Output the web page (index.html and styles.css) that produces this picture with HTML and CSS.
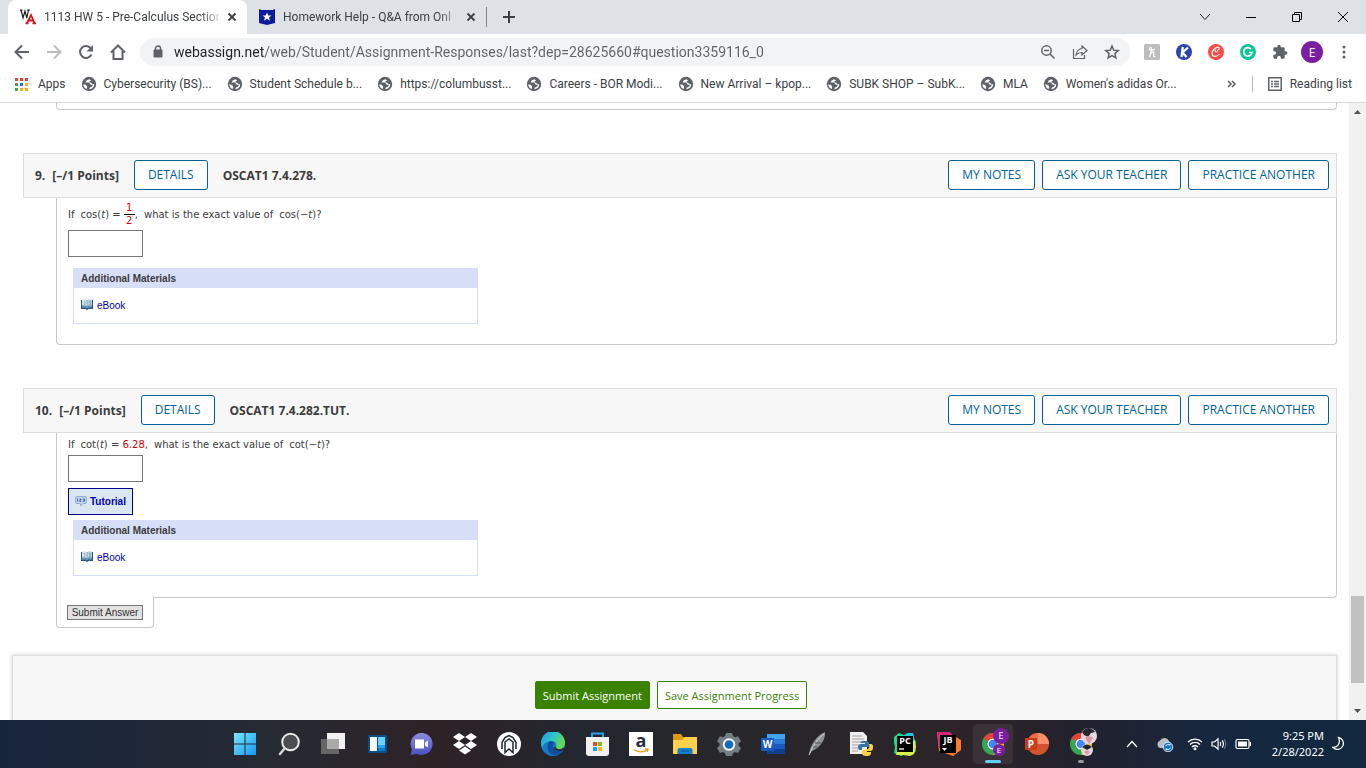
FILE: index.html
```html
<!DOCTYPE html>
<html lang="en">
<head>
  <meta charset="utf-8">
  <title>1113 HW 5 - Pre-Calculus Section</title>
  <link rel="stylesheet" href="styles.css">
</head>
<body>
  <!-- shared icons -->
  <svg class="sprite" aria-hidden="true">
    <symbol id="globe" viewBox="0 0 16 16">
      <circle cx="8" cy="8" r="7.2" fill="#5f6368"/>
      <path d="M8.500 3.200 5.800 4.300 4.600 6.500h3.600l1.500 2.300h2.200l-1 2-2 .6-.6 1.800c2.800-.2 4.900-2.300 5-5l-1.800.1-1.400-1.600-1.600-.2.200-1.300 1.500-.7z" fill="#fff"/>
      <path d="M2.200 8.300 5 9l1.200 1.800-.5 2.200A5.500 5.500 0 0 1 2.200 8.300z" fill="#fff"/>
    </symbol>
    <symbol id="close" viewBox="0 0 10 10">
      <path d="M1.5 1.5l7 7m0-7l-7 7" stroke="#3c4043" stroke-width="1.8" fill="none"/>
    </symbol>
    <symbol id="book" viewBox="0 0 12 11">
      <path d="M0 1h12v9H7.500L6 11 4.500 10H0z" fill="#27577f"/>
      <path d="M1 .5h4l1 1v7.500l-1-.8H1z" fill="#d5e3ec"/>
      <path d="M11 .5H7l-1 1v7.500l1-.8h4z" fill="#b5cddc"/>
      <path d="M1 6.500h4l1 .8V9l-1-.8H1zM11 6.500H7l-1 .8V9l1-.8h4z" fill="#5f93b8"/>
      <path d="M6 1.500v7.500M2.500 2.500h1.500v3H2.500M8 2.500h1.500v3H8" stroke="#7d99ac" stroke-width=".6" fill="none"/>
    </symbol>
    <symbol id="chrome" viewBox="0 0 24 24">
      <circle cx="12" cy="12" r="11" fill="#34a853"/>
      <path d="M12 12 2.500 6.500A11 11 0 0 1 21.500 6.500z" fill="#ea4335"/>
      <path d="M12 7h9.800A11 11 0 0 1 12 23l4.500-8.500z" fill="#fbbc05"/>
      <circle cx="12" cy="12" r="5.500" fill="#fff"/>
      <circle cx="12" cy="12" r="4.300" fill="#4285f4"/>
    </symbol>
  </svg>

  <!-- tab strip -->
  <header class="tabs">
    <div class="tab tab-active">
      <svg width="16" height="16" viewBox="0 0 16 16"><path d="M1 1l2 8 2-7 1.800 7L8.500 1M0 1.200h2.500M7.200 1.200h2.600" stroke="#222" stroke-width="1.200" fill="none"/><path d="M7 14 11 6l3.500 8M8.500 11.500h5M5.500 14.300h3M12.500 14.300h3.500" stroke="#d31515" stroke-width="1.800" fill="none"/></svg>
      <span class="tab-title">1113 HW 5 - Pre-Calculus Section</span>
      <button class="icon-btn" aria-label="Close tab"><svg width="10" height="10"><use href="#close"/></svg></button>
    </div>
    <div class="tab">
      <svg width="16" height="16" viewBox="0 0 16 16"><path d="M0 0l2.500 1h11L16 0v14l-8 2-8-2z" fill="#0c1b9a"/><path d="M8 3.500l1.300 3h3.200L10 8.500l1 3.200-3-2-3 2 1-3.200-2.500-2h3.200z" fill="#fff"/></svg>
      <span class="tab-title">Homework Help - Q&amp;A from Onl</span>
      <button class="icon-btn" aria-label="Close tab"><svg width="10" height="10"><use href="#close"/></svg></button>
    </div>
    <span class="tab-divider"></span>
    <button class="icon-btn new-tab" aria-label="New tab"><svg width="14" height="14" viewBox="0 0 14 14"><path d="M7 1v12M1 7h12" stroke="#3c4043" stroke-width="2"/></svg></button>
    <div class="window-controls">
      <button class="icon-btn" aria-label="Search tabs"><svg width="12" height="12" viewBox="0 0 12 12"><path d="M1 3l5 5.500L11 3" stroke="#222" fill="none"/></svg></button>
      <button class="icon-btn" aria-label="Minimize"><svg width="12" height="12" viewBox="0 0 12 12"><path d="M1 6.500h10" stroke="#000"/></svg></button>
      <button class="icon-btn" aria-label="Restore"><svg width="12" height="12" viewBox="0 0 12 12"><path d="M1.500 3.500h7v7h-7zM3.500 3.500v-2h7v7h-2" stroke="#000" fill="none"/></svg></button>
      <button class="icon-btn" aria-label="Close"><svg width="12" height="12" viewBox="0 0 12 12"><path d="M1 1l10 10M11 1L1 11" stroke="#000"/></svg></button>
    </div>
  </header>

  <!-- toolbar -->
  <div class="toolbar">
    <button class="icon-btn" aria-label="Back"><svg width="16" height="16" viewBox="0 0 16 16"><path d="M15 8H2M8 1.500 1.500 8 8 14.500" stroke="#5f6368" stroke-width="2" fill="none"/></svg></button>
    <button class="icon-btn" aria-label="Forward"><svg width="16" height="16" viewBox="0 0 16 16"><path d="M1 8h13M8 1.500 14.500 8 8 14.500" stroke="#babcbe" stroke-width="2" fill="none"/></svg></button>
    <button class="icon-btn" aria-label="Reload"><svg width="16" height="16" viewBox="0 0 16 16"><path d="M13.500 10.500A6 6 0 1 1 13 4.500" stroke="#5f6368" stroke-width="2" fill="none"/><path d="M15 1v6.500H8.500z" fill="#5f6368"/></svg></button>
    <button class="icon-btn" aria-label="Home"><svg width="16" height="16" viewBox="0 0 16 16"><path d="M1 8.500 8 1.500l7 7M3.500 7v8h9V7" stroke="#5f6368" stroke-width="2" fill="none"/></svg></button>
    <div class="omnibox">
      <svg width="10" height="14" viewBox="0 0 10 14"><path d="M1 5h8v7H1z" fill="#5f6368" stroke="#5f6368" stroke-linejoin="round"/><path d="M2.500 5V3.500a2.500 2.500 0 0 1 5 0V5" stroke="#5f6368" stroke-width="1.500" fill="none"/></svg>
      <input class="url" type="text" aria-label="Address" value="webassign.net/web/Student/Assignment-Responses/last?dep=28625660#question3359116_0">
      <button class="icon-btn" aria-label="Zoom"><svg width="16" height="16" viewBox="0 0 16 16"><circle cx="6.500" cy="6.500" r="4.700" stroke="#5f6368" stroke-width="1.500" fill="none"/><path d="M10 10l4.500 4.500M4 6.500h5" stroke="#5f6368" stroke-width="1.600"/></svg></button>
      <button class="icon-btn" aria-label="Share"><svg width="16" height="16" viewBox="0 0 16 16"><path d="M1.500 5v9.500h11V11" stroke="#5f6368" fill="none" stroke-width="1.200"/><path d="M10 2l5 4.500-5 4.500V8.500c-3 0-4.500.8-6 2.500.5-3.500 2.500-6 6-6.500z" stroke="#5f6368" stroke-width="1.200" fill="none"/></svg></button>
      <button class="icon-btn" aria-label="Bookmark"><svg width="16" height="16" viewBox="0 0 16 16"><path d="M8 2l1.800 4.200 4.500.4-3.400 3 1 4.400L8 11.700 4.100 14l1-4.400-3.400-3 4.500-.4z" stroke="#5f6368" stroke-width="1.500" fill="none"/></svg></button>
    </div>
    <div class="extensions">
      <button class="icon-btn" aria-label="Honey"><svg width="16" height="16" viewBox="0 0 16 16"><rect width="16" height="16" rx="1.500" fill="#bdbdbd"/><path d="M5.500 13C7 9.500 8 3.500 7 3.500S4.500 5.500 6 5.800s4 0 4.800-.8M6.500 10c1-2 3.500-3 3.300-.5l-.3 2.500c0 1 1 .8 2 0" stroke="#fff" stroke-width="1.200" fill="none"/></svg></button>
      <button class="icon-btn" aria-label="Keepa"><svg width="16" height="16" viewBox="0 0 16 16"><circle cx="8" cy="8" r="8" fill="#2f43ad"/><path d="M6.800 3 5.500 13M12 3.500 6.500 8.500l4 4.500" stroke="#fff" stroke-width="2.300" fill="none"/></svg></button>
      <button class="icon-btn" aria-label="Capital One Shopping"><svg width="16" height="16" viewBox="0 0 16 16"><circle cx="8" cy="8" r="8" fill="#fb4b46"/><path d="M9 6.500c2-.5 3-2.500 1.500-3.200C8.500 2.500 4 6 4 9.500c0 4 5 3.500 7.500.5M7.500 5.500C6.500 8 8 8.500 9.500 7.500" stroke="#fff" stroke-width="1.100" fill="none"/></svg></button>
      <button class="icon-btn" aria-label="Grammarly"><svg width="16" height="16" viewBox="0 0 16 16"><circle cx="8" cy="8" r="8" fill="#15c39a"/><path d="M11 5a4.200 4.200 0 1 0 1 3.500H9" stroke="#fff" stroke-width="1.600" fill="none"/></svg></button>
      <button class="icon-btn" aria-label="Extensions"><svg width="16" height="16" viewBox="0 0 24 24"><path d="M20.500 11H19V7c0-1.100-.9-2-2-2h-4V3.500a2.500 2.500 0 0 0-5 0V5H4c-1.100 0-2 .9-2 2v3.800h1.500a2.700 2.700 0 0 1 0 5.400H2V20c0 1.100.9 2 2 2h3.800v-1.500a2.700 2.700 0 0 1 5.400 0V22H17c1.100 0 2-.9 2-2v-4h1.500a2.500 2.500 0 0 0 0-5z" fill="#5f6368"/></svg></button>
      <button class="icon-btn avatar">E</button>
      <button class="icon-btn" aria-label="Menu"><svg width="16" height="16" viewBox="0 0 16 16" fill="#5f6368"><circle cx="8" cy="3" r="1.500"/><circle cx="8" cy="8" r="1.500"/><circle cx="8" cy="13" r="1.500"/></svg></button>
    </div>
  </div>

  <!-- bookmarks -->
  <nav class="bookmarks">
    <a class="bookmark" href="#"><svg width="15" height="13" viewBox="0 0 15 13"><path d="M0 0h3v3H0zM5 0h3v3H5zM10 0h3v3h-3z" fill="#ea4335"/><path d="M0 5h3v3H0zM0 10h3v3H0z" fill="#34a853"/><path d="M5 5h3v3H5z" fill="#1a73e8"/><path d="M10 5h3v3h-3zM5 10h3v3H5zM10 10h3v3h-3z" fill="#fbaf05"/></svg>Apps</a>
    <a class="bookmark" href="#"><svg width="16" height="16"><use href="#globe"/></svg>Cybersecurity (BS)...</a>
    <a class="bookmark" href="#"><svg width="16" height="16"><use href="#globe"/></svg>Student Schedule b...</a>
    <a class="bookmark" href="#"><svg width="16" height="16"><use href="#globe"/></svg>https://columbusst...</a>
    <a class="bookmark" href="#"><svg width="16" height="16"><use href="#globe"/></svg>Careers - BOR Modi...</a>
    <a class="bookmark" href="#"><svg width="16" height="16"><use href="#globe"/></svg>New Arrival – kpop...</a>
    <a class="bookmark" href="#"><svg width="16" height="16"><use href="#globe"/></svg>SUBK SHOP – SubK...</a>
    <a class="bookmark" href="#"><svg width="16" height="16"><use href="#globe"/></svg>MLA</a>
    <a class="bookmark" href="#"><svg width="16" height="16"><use href="#globe"/></svg>Women's adidas Or...</a>
    <div class="bookmarks-end">
      <button class="icon-btn" aria-label="More bookmarks"><svg width="10" height="8" viewBox="0 0 10 8"><path d="M1 1l3 3-3 3M5 1l3 3-3 3" stroke="#5f6368" stroke-width="1.600" fill="none"/></svg></button>
      <span class="bar-divider"></span>
      <a class="bookmark" href="#"><svg width="14" height="14" viewBox="0 0 14 14"><path d="M.8.8h12.400v12.400H.8z" stroke="#5f6368" stroke-width="1.500" fill="none"/><path d="M3 4.500h2M3 7h2M3 9.500h2M6 4.500h5M6 7h5M6 9.500h5" stroke="#5f6368" stroke-width="1.400"/></svg>Reading list</a>
    </div>
  </nav>

  <div class="viewport">
    <main class="page">
      <div class="previous-question"></div>

      <section class="question">
        <div class="question-header">
          <span class="number">9.</span>
          <span class="points">[–/1 Points]</span>
          <button class="outline-btn">DETAILS</button>
          <span class="source">OSCAT1 7.4.278.</span>
          <div class="header-actions">
            <button class="outline-btn">MY NOTES</button>
            <button class="outline-btn">ASK YOUR TEACHER</button>
            <button class="outline-btn">PRACTICE ANOTHER</button>
          </div>
        </div>
        <div class="question-body">
          <label class="prompt prompt-tall" for="answer9">
            <span>If</span>
            <span class="math">cos(<i>t</i>) = <span class="fraction"><span>1</span><span>2</span></span>,</span>
            <span>what is the exact value of</span>
            <span>cos(−<i>t</i>)?</span>
          </label>
          <input class="answer" id="answer9" type="text">
          <div class="materials">
            <h3>Additional Materials</h3>
            <a href="#"><svg width="12" height="11"><use href="#book"/></svg>eBook</a>
          </div>
        </div>
      </section>

      <section class="question">
        <div class="question-header">
          <span class="number">10.</span>
          <span class="points">[–/1 Points]</span>
          <button class="outline-btn">DETAILS</button>
          <span class="source">OSCAT1 7.4.282.TUT.</span>
          <div class="header-actions">
            <button class="outline-btn">MY NOTES</button>
            <button class="outline-btn">ASK YOUR TEACHER</button>
            <button class="outline-btn">PRACTICE ANOTHER</button>
          </div>
        </div>
        <div class="question-body with-submit">
          <label class="prompt" for="answer10">
            <span>If</span>
            <span>cot(<i>t</i>) = <span class="value">6.28</span>,</span>
            <span>what is the exact value of</span>
            <span>cot(−<i>t</i>)?</span>
          </label>
          <input class="answer" id="answer10" type="text">
          <button class="tutorial"><svg width="12" height="11" viewBox="0 0 12 11"><path d="M2 .5h8a1.500 1.500 0 0 1 1.500 1.500v4A1.500 1.500 0 0 1 10 7.500H8L6 10 5 7.500H2A1.500 1.500 0 0 1 .5 6V2A1.500 1.500 0 0 1 2 .5z" fill="#c3d4f0" stroke="#93acd4"/><path d="M2.500 2.500v3M4.500 3h1.500v1H4.800v1.300H6.500M8 3h1.500v2.300H8M8 4.200h1.500" stroke="#3f5f9e" stroke-width=".9" fill="none"/></svg>Tutorial</button>
          <div class="materials materials-near">
            <h3>Additional Materials</h3>
            <a href="#"><svg width="12" height="11"><use href="#book"/></svg>eBook</a>
          </div>
        </div>
        <div class="submit-tab"><button class="submit-answer">Submit Answer</button></div>
      </section>

      <footer class="assignment-footer">
        <button class="green-btn">Submit Assignment</button>
        <button class="green-btn green-btn-outline">Save Assignment Progress</button>
      </footer>
    </main>
    <div class="scrollbar">
      <svg width="17" height="17" viewBox="0 0 17 17"><path d="M5 11l3.500-4L12 11z" fill="#505050"/></svg>
      <div class="track"><div class="thumb"></div></div>
      <svg width="17" height="17" viewBox="0 0 17 17"><path d="M5 6l3.500 4L12 6z" fill="#505050"/></svg>
    </div>
  </div>

  <!-- taskbar -->
  <footer class="taskbar">
    <div class="apps-row">
      <button class="task" aria-label="Start"><svg width="24" height="24" viewBox="0 0 24 24"><defs><linearGradient id="win" x2="1" y2="1"><stop stop-color="#7be6fb"/><stop offset="1" stop-color="#1398f3"/></linearGradient></defs><path d="M1 1h10.500v10.500H1zM12.500 1H23v10.500H12.500zM1 12.500h10.500V23H1zM12.500 12.500H23V23H12.500z" fill="url(#win)"/></svg></button>
      <button class="task" aria-label="Search"><svg width="24" height="24" viewBox="0 0 24 24"><circle cx="13.500" cy="10" r="8.300" fill="#4c4d52" stroke="#e8e8e8" stroke-width="2"/><path d="M7.500 16.500 3 22" stroke="#d5d5d5" stroke-width="2.500" stroke-linecap="round"/></svg></button>
      <button class="task" aria-label="Task view"><svg width="24" height="24" viewBox="0 0 24 24"><path d="M6 1h18v16H6z" fill="#f1f1f1"/><path d="M0 7h18v15H0z" fill="#6d6d6d" fill-opacity=".9"/><path d="M6 7h12v10H6z" fill="#aaa"/></svg></button>
      <button class="task" aria-label="Widgets"><svg width="24" height="24" viewBox="0 0 24 24"><rect x="3" y="3" width="19" height="18" rx="1" fill="#0d4c87"/><path d="M5 5h7v14H5z" fill="#f5f9fc"/><path d="M13 5h7v8h-7z" fill="#68d3fb"/><path d="M13 13h7v3h-7z" fill="#21a7f1"/><path d="M13 16h7v3h-7z" fill="#0879d0"/></svg></button>
      <button class="task" aria-label="Chat"><svg width="24" height="24" viewBox="0 0 24 24"><defs><linearGradient id="chat" x2="0" y2="1"><stop stop-color="#8a8edc"/><stop offset="1" stop-color="#4d4fc4"/></linearGradient></defs><path d="M12.500 1A11 11 0 1 1 8 22l-6.500 1 1.500-5.500A11 11 0 0 1 12.500 1z" fill="url(#chat)"/><path d="M6 7.500h9v9H6zM16 10.500l3-2v7l-3-2z" fill="#fff"/></svg></button>
      <button class="task" aria-label="Dropbox"><svg width="24" height="24" viewBox="0 0 24 24" fill="#fff"><path d="M6 1l6 4-6 4-6-4zM18 1l6 4-6 4-6-4zM6 9l6 4-6 4-6-4zM18 9l6 4-6 4-6-4zM12 14.500l6 4-6 4-6-4z"/></svg></button>
      <button class="task" aria-label="Alienware"><svg width="24" height="24" viewBox="0 0 24 24"><circle cx="12" cy="12" r="12" fill="#fff"/><path d="M5 17V10.500L8 5.500 12 3.500l4 2 3 5V17" fill="none" stroke="#222831" stroke-width="1.500"/><path d="M8 20.500V10L12 7l4 3v10.500L12 17z" fill="none" stroke="#222831" stroke-width="1.500"/></svg></button>
      <button class="task" aria-label="Edge"><svg width="24" height="24" viewBox="0 0 24 24"><defs><linearGradient id="edge" x2="1" y2=".5"><stop stop-color="#2194dc"/><stop offset=".5" stop-color="#2fc1d0"/><stop offset="1" stop-color="#63da50"/></linearGradient></defs><circle cx="12" cy="12" r="12" fill="#1678c8"/><path d="M0 11A12 12 0 0 1 24 11c0 4-3 6-6 6s-4-1-3.500-2.500c2-2 0-5.500-4-5.500C6 9 2 11 1.500 16A12 12 0 0 1 0 11z" fill="url(#edge)"/><path d="M10 9C5 10 5 20 12 23c5 .5 8-2 10-5.500-4 2-9 1-10-2-.8-2 .5-3 .5-4S11 9 10 9z" fill="#124c9c"/><path d="M14.500 14c-.5 3 4 4 7 2.500l2.500-1v3l-2 0c-4 1.500-8.500 0-9.500-3z" fill="#282a34"/></svg></button>
      <button class="task" aria-label="Microsoft Store"><svg width="24" height="24" viewBox="0 0 24 24"><path d="M7 6V1.500h11V6" stroke="#2a9ff0" stroke-width="2" fill="none"/><path d="M1 5h23v16a3 3 0 0 1-3 3H4a3 3 0 0 1-3-3z" fill="#f1f1f1"/><path d="M8 10h4v4H8z" fill="#e84d25"/><path d="M13 10h4v4h-4z" fill="#7cba15"/><path d="M8 15h4v4H8z" fill="#12a2eb"/><path d="M13 15h4v4h-4z" fill="#fbb80e"/></svg></button>
      <button class="task" aria-label="Amazon"><svg width="24" height="24" viewBox="0 0 24 24"><path d="M0 0h24v24H0z" fill="#fff"/><text class="icon-text" x="12" y="15" font-size="18" text-anchor="middle" fill="#232f3e">a</text><path d="M5 17.500c4 3 10 3 13 .5M16 17h3l-.5 3" stroke="#f79a1e" stroke-width="1.300" fill="none"/></svg></button>
      <button class="task" aria-label="File Explorer"><svg width="24" height="24" viewBox="0 0 24 24"><path d="M0 2h8l2 3h14v4H0z" fill="#d99c11"/><path d="M0 8h9l3-3h12v17H0z" fill="#fbd04b"/><path d="M4.500 22v-4a2 2 0 0 1 2-2h11a2 2 0 0 1 2 2v4z" fill="#1580cf"/><path d="M8 19h8" stroke="#0a5697"/></svg></button>
      <button class="task" aria-label="Settings"><svg width="24" height="24" viewBox="0 0 24 24"><path d="M9 1h6l1 3 2 1.200 3-1 3 5-2.500 2.300v2L24 16l-3 5-3-1-2 1.200-1 2.800H9l-1-2.800L6 20l-3 1-3-5 2.500-2.500v-2L0 9.200l3-5 3 1L8 4z" fill="#747d84"/><circle cx="12" cy="12.500" r="6.300" fill="#f4f4f4"/><circle cx="12" cy="12.500" r="4.300" fill="#0f6cbd"/></svg></button>
      <button class="task" aria-label="Word"><svg width="24" height="24" viewBox="0 0 24 24"><path d="M6 2h18v6H6z" fill="#41a5ee"/><path d="M6 7h18v6H6z" fill="#2b7cd3"/><path d="M6 12h18v5H6z" fill="#185abd"/><path d="M6 17h18v5H6z" fill="#103f91"/><path d="M0 6h13v13H0z" fill="#185abd"/><text class="icon-text" x="6.500" y="16" font-size="10" text-anchor="middle" fill="#fff">W</text></svg></button>
      <button class="task" aria-label="Feather"><svg width="24" height="24" viewBox="0 0 24 24"><path d="M4 23C5 13 12 3 20 0c1 7-5 16-13 19z" fill="#8e9295"/><path d="M4 23C8 14 13 6 19 2" stroke="#d0d2d3" stroke-width="1" fill="none"/><path d="M8 15l6 0M10 11l7 0" stroke="#55595e"/></svg></button>
      <button class="task" aria-label="Python file"><svg width="24" height="24" viewBox="0 0 24 24"><path d="M1 0h13l4 4v18H1z" fill="#eee"/><path d="M3 4h10M3 7h12M3 10h12M3 13h7M3 16h6M3 19h6" stroke="#a2a2a2"/><path d="M13 9h5a2 2 0 0 1 2 2v4h-7v3h-2a2 2 0 0 1-2-2c0-3 1-4 3-4h4v-1h-5z" fill="#3674a8"/><path d="M20 12h2q2 0 2 3c0 3-1 4-3 4h-3v1h4c0 3-1 4-4 4-4 0-5-1-5-3v-3l6-1q2-1 1-5z" fill="#ffd343"/></svg></button>
      <button class="task" aria-label="PyCharm"><svg width="24" height="24" viewBox="0 0 24 24"><path d="M1 5l5-4 5 2 4-2 5 0 1 5 2 4-1 6 1 3-4 4-6-1-5 2-5-2-2-1 1-6-1-4z" fill="#21d789"/><path d="M18 8l4 1 1 6-2 7-4 2-7-1-7 0 2-8z" fill="#d9f04a"/><path d="M12 3l3-2h5l1 5-3 5z" fill="#22c5e8"/><path d="M4 4h16v16H4z" fill="#000"/><text class="icon-text" x="12" y="12" font-size="9" text-anchor="middle" fill="#fff">PC</text><path d="M6 17h5" stroke="#fff" stroke-width="1.300"/></svg></button>
      <button class="task" aria-label="JetBrains"><svg width="24" height="24" viewBox="0 0 24 24"><path d="M0 0h10l14 8v10l-8 6-14-5z" fill="#fb7a2c"/><path d="M0 0h13l4 5-9 13-6-2z" fill="#d6277d"/><path d="M3 3h16v18H3z" fill="#000"/><text class="icon-text" x="11" y="11" font-size="9" text-anchor="middle" fill="#fff">JB</text><path d="M5 16h5l-2.500 3z" fill="#fff"/></svg></button>
      <button class="task task-active" aria-label="Chrome"><svg width="32" height="32" viewBox="0 0 32 32"><use href="#chrome" x="4" y="4" width="24" height="24"/><circle cx="24" cy="8" r="8" fill="#7b1fa2"/><text class="badge-text" x="24" y="11" text-anchor="middle">E</text><circle cx="22" cy="22" r="6" fill="#7b1fa2"/><text class="badge-text badge-text-small" x="22" y="25" text-anchor="middle">E</text></svg></button>
      <button class="task" aria-label="PowerPoint"><svg width="24" height="24" viewBox="0 0 24 24"><circle cx="13" cy="12" r="11" fill="#d35230"/><path d="M13 1a11 11 0 0 1 11 11H13z" fill="#ff8f6b"/><path d="M13 1v11H2A11 11 0 0 1 13 1z" fill="#ed6c47"/><path d="M0 6h12v12H0z" fill="#c43e1c"/><text class="icon-text" x="6" y="16" font-size="10" text-anchor="middle" fill="#fff">P</text></svg></button>
      <button class="task task-open" aria-label="Chrome, second profile"><svg width="32" height="32" viewBox="0 0 32 32"><use href="#chrome" x="4" y="4" width="24" height="24"/><circle cx="24" cy="8" r="8" fill="#e5d9df"/><path d="M17 4q7-8 13 0l-4 1-3 4-4-2z" fill="#29242b"/><path d="M20 10q3-4 8 0l-4 6z" fill="#db95a8"/><circle cx="22" cy="22" r="6" fill="#e5d9df"/><path d="M17 19q5-5 10 0l-5 3z" fill="#29242b"/><path d="M19 24q3-3 6 0l-3 3z" fill="#db95a8"/></svg></button>
    </div>
    <div class="tray">
      <svg width="12" height="12" viewBox="0 0 12 12"><path d="M1 9l5-5.500L11 9" stroke="#fff" stroke-width="1.300" fill="none"/></svg>
      <svg class="cloud" width="18" height="16" viewBox="0 0 18 16"><path d="M4 12a4 4 0 0 1 0-7.500A5 5 0 0 1 13 5l3 4-4 3z" fill="#b9bcc0"/><circle cx="12" cy="11" r="4.800" fill="#0f70c9" stroke="#fff" stroke-width=".8"/><path d="M9.500 10.300a2.800 2.800 0 0 1 4.500-1V7.800M14.500 11.700a2.800 2.800 0 0 1-4.500 1v1.500" stroke="#fff" fill="none"/></svg>
      <svg width="16" height="14" viewBox="0 0 16 14"><path d="M1 5a10 10 0 0 1 14 0M3 7.500a7 7 0 0 1 10 0M5 10a4.200 4.200 0 0 1 6 0" stroke="#fff" stroke-width="1.300" fill="none"/><circle cx="8" cy="11.800" r="1.500" fill="#fff"/></svg>
      <svg width="16" height="14" viewBox="0 0 16 14"><path d="M1 5h2.500L7 1.800v10.400L3.500 9H1z" stroke="#fff" stroke-width="1.200" fill="none"/><path d="M9 5q1.500 2 0 4M11 3.500q3 3.500 0 7" stroke="#fff" stroke-width="1.200" fill="none"/><path d="M13.500 2q3 5 0 10" stroke="#75808d" fill="none"/></svg>
      <svg width="16" height="12" viewBox="0 0 16 12"><rect x="1" y="1.500" width="13" height="9" rx="1.500" stroke="#fff" fill="none" stroke-width="1.200"/><path d="M3 3.500h9v5H3zM14.500 4h1.500v4h-1.500z" fill="#fff"/></svg>
      <div class="clock"><span>9:25 PM</span><span>2/28/2022</span></div>
      <svg width="14" height="16" viewBox="0 0 14 16"><path d="M6.500 1.500a6 6 0 1 1-5.500 10c4.500 0 8-4 5.500-10z" stroke="#fff" stroke-width="1.300" fill="none"/></svg>
    </div>
  </footer>
</body>
</html>
```

FILE: styles.css
```css
* {
  box-sizing: border-box;
}

body {
  margin: 0;
  height: 100vh;
  display: flex;
  flex-direction: column;
  overflow: hidden;
  background: #fff;
  color: #3c4043;
  font-family: "Open Sans", sans-serif;
  font-size: 12px;
}

button {
  font-family: inherit;
  cursor: pointer;
}

svg {
  display: block;
  flex-shrink: 0;
}

a {
  text-decoration: none;
}

.sprite {
  position: absolute;
  width: 0;
  height: 0;
}

.icon-btn {
  display: flex;
  align-items: center;
  justify-content: center;
  padding: 0;
  border: 0;
  background: none;
}

/* tab strip */
.tabs {
  display: flex;
  align-items: center;
  height: 34px;
  padding-left: 8px;
  background: #dee1e6;
  font-family: Roboto, sans-serif;
}

.tab {
  display: flex;
  align-items: center;
  gap: 8px;
  width: 239px;
  height: 34px;
  padding: 0 10px 0 12px;
}

.tab-active {
  background: #fff;
  border-radius: 8px 8px 0 0;
}

.tab-title {
  flex: 1;
  overflow: hidden;
  white-space: nowrap;
  -webkit-mask-image: linear-gradient(90deg, #000 155px, transparent 180px);
  mask-image: linear-gradient(90deg, #000 155px, transparent 180px);
}

.tab-divider {
  width: 1px;
  height: 20px;
  background: #80868b;
}

.new-tab {
  margin-left: 15px;
}

.window-controls {
  display: flex;
  gap: 34px;
  height: 28px;
  margin-left: auto;
  padding-right: 17px;
}

/* toolbar */
.toolbar {
  display: flex;
  align-items: center;
  gap: 16px;
  height: 36px;
  padding: 0 14px;
}

.omnibox {
  flex: 1;
  display: flex;
  align-items: center;
  gap: 16px;
  height: 28px;
  margin: 0 -2px;
  padding: 0 10px 0 13px;
  border-radius: 14px;
  background: #f1f3f4;
}

/* host part of the address is darker than the path */
.url {
  flex: 1;
  margin-left: -5px;
  padding: 0;
  border: 0;
  outline: 0;
  font-family: Roboto, sans-serif;
  font-size: 14px;
  background: linear-gradient(90deg, #202124 91px, #5f6368 91px);
  -webkit-background-clip: text;
  background-clip: text;
  -webkit-text-fill-color: transparent;
}

.extensions {
  display: flex;
  align-items: center;
  gap: 16px;
}

.avatar {
  width: 22px;
  height: 22px;
  margin: 0 -3px;
  border-radius: 50%;
  background: #7b1fa2;
  color: #fff;
  font-size: 12px;
}

/* bookmarks bar */
.bookmarks {
  display: flex;
  align-items: center;
  gap: 15px;
  height: 33px;
  padding: 0 14px 4px 15px;
  border-bottom: 1px solid #d9dbde;
  font-family: Roboto, sans-serif;
}

.bookmark {
  display: flex;
  align-items: center;
  gap: 8px;
  color: #3c4043;
  white-space: nowrap;
}

.bookmarks > .bookmark + .bookmark {
  gap: 7px;
}

.bookmarks-end {
  display: flex;
  align-items: center;
  gap: 15px;
  margin-left: auto;
}

.bar-divider {
  width: 1px;
  height: 16px;
  background: #babcbe;
}

/* web page */
.viewport {
  flex: 1;
  display: flex;
  min-height: 0;
}

.page {
  flex: 1;
  overflow: hidden;
  padding: 0 12px;
  color: #3c3c3c;
}

.previous-question {
  height: 7px;
  margin: 0 0 43px 44px;
  border: 1px solid #c8c8c8;
  border-top: 0;
  border-radius: 0 0 4px 4px;
}

.question {
  margin-bottom: 43px;
  padding-left: 11px;
}

.question-header {
  display: flex;
  align-items: center;
  padding: 6px 7px 7px 11px;
  border: 1px solid #dedede;
  background: #f7f7f7;
  font-weight: bold;
}

.points {
  margin: 0 15px 0 7px;
}

.source {
  margin-left: 15px;
}

.header-actions {
  display: flex;
  gap: 7px;
  margin-left: auto;
}

.outline-btn {
  height: 30px;
  padding: 0 13px;
  border: 1px solid #006298;
  border-radius: 3px;
  background: #fff;
  color: #006298;
  font-size: 12px;
  line-height: 16px;
}

.question-body {
  margin-left: 33px;
  padding: 0 11px 20px;
  border: 1px solid #c8c8c8;
  border-top: 0;
  border-radius: 0 0 4px 4px;
}

.with-submit {
  padding-bottom: 21px;
  border-bottom-left-radius: 0;
}

.prompt {
  display: flex;
  align-items: center;
  gap: 6px;
  height: 22px;
  font-family: "DejaVu Sans", sans-serif;
  font-size: 10px;
}

.prompt-tall {
  height: 32px;
}

.math {
  display: flex;
  align-items: center;
  white-space: pre;
}

.fraction {
  display: flex;
  flex-direction: column;
  width: 11px;
  text-align: center;
  line-height: 12px;
  color: #d00;
}

.fraction span:first-child {
  border-bottom: 1px solid #000;
}

.value {
  color: #d00;
}

.answer {
  display: block;
  width: 75px;
  height: 27px;
  border: 1px solid #767676;
}

.tutorial {
  display: flex;
  align-items: center;
  gap: 3px;
  height: 27px;
  margin-top: 6px;
  padding: 0 6px;
  border: 1px solid #00008b;
  background: #dae6f0;
  color: #0000b4;
  font-family: "Liberation Sans", Arial, sans-serif;
  font-size: 10px;
  font-weight: bold;
}

.materials {
  width: 405px;
  margin: 11px 0 0 5px;
  border: 1px solid #d6def8;
  font-family: "Liberation Sans", Arial, sans-serif;
  font-size: 10px;
}

.materials-near {
  margin-top: 5px;
}

.materials h3 {
  margin: 0;
  padding: 0 7px;
  background: #d6def8;
  font-size: 10px;
  line-height: 19px;
}

.materials a {
  display: flex;
  align-items: center;
  gap: 4px;
  height: 35px;
  padding: 0 7px;
  color: #0000b4;
}

.materials svg {
  margin-bottom: 3px;
}

/* drops out of the bottom left corner of the question box */
.submit-tab {
  width: 98px;
  height: 31px;
  margin: -1px 0 -16px 33px;
  padding: 8px 10px;
  border: 1px solid #c8c8c8;
  border-top: 0;
  border-radius: 0 0 4px 4px;
  background: #fff;
}

.submit-answer {
  display: block;
  width: 76px;
  height: 15px;
  padding: 0;
  border: 1px solid #767676;
  background: #e1e1e1;
  color: #333;
  font-family: "Liberation Sans", Arial, sans-serif;
  font-size: 10px;
}

.assignment-footer {
  display: flex;
  justify-content: center;
  gap: 7px;
  height: 90px;
  padding: 25px 7px 0 0;
  border: 1px solid #dedede;
  background: #f7f7f7;
  box-shadow: 0 0 4px #ccc;
}

.green-btn {
  height: 28px;
  padding: 0 7px;
  border: 1px solid #3a8200;
  border-radius: 2px;
  background: #3a8200;
  color: #fff;
  font-size: 11px;
}

.green-btn-outline {
  background: #fff;
  color: #3a8200;
}

.scrollbar {
  display: flex;
  flex-direction: column;
  width: 17px;
  background: #f1f1f1;
}

.track {
  flex: 1;
  display: flex;
  flex-direction: column;
  justify-content: flex-end;
  padding: 0 2px 20px;
}

.thumb {
  height: 87px;
  background: #c1c1c1;
}

/* taskbar */
.taskbar {
  display: flex;
  justify-content: flex-end;
  height: 48px;
  background: linear-gradient(90deg, #17253c, #262a33 20%, #2e2226 32%, #23272f 42%, #292629 60%, #2c2328 72%, #20222e 80%, #152840 90%, #12283f);
}

.apps-row {
  display: flex;
  align-items: center;
}

.task {
  display: flex;
  align-items: center;
  justify-content: center;
  width: 44px;
  height: 40px;
  padding: 0;
  border: 0;
  background: none;
}

.task-active,
.task-open {
  position: relative;
}

.task-active {
  width: 40px;
  margin: 0 2px;
  border-radius: 4px;
  background: #3b3237;
}

.task-active::after,
.task-open::after {
  content: "";
  position: absolute;
  bottom: 1px;
  left: calc(50% - 8px);
  width: 16px;
  height: 3px;
  border-radius: 2px;
  background: #60cdff;
}

.task-open::after {
  left: calc(50% - 3px);
  width: 6px;
  background: #9a9a9d;
}

.icon-text {
  font-family: "Open Sans", sans-serif;
  font-weight: bold;
}

.badge-text {
  fill: #fff;
  font-size: 9px;
}

.badge-text-small {
  font-size: 8px;
}

.tray {
  display: flex;
  align-items: center;
  gap: 8px;
  width: 263px;
  padding: 0 20px 0 23px;
  color: #fff;
}

.cloud {
  margin: 0 5px 0 10px;
}

.clock {
  display: flex;
  flex-direction: column;
  align-items: flex-end;
  flex: 1;
  font-family: "Noto Sans", sans-serif;
  font-size: 11px;
  line-height: 16px;
}
```
